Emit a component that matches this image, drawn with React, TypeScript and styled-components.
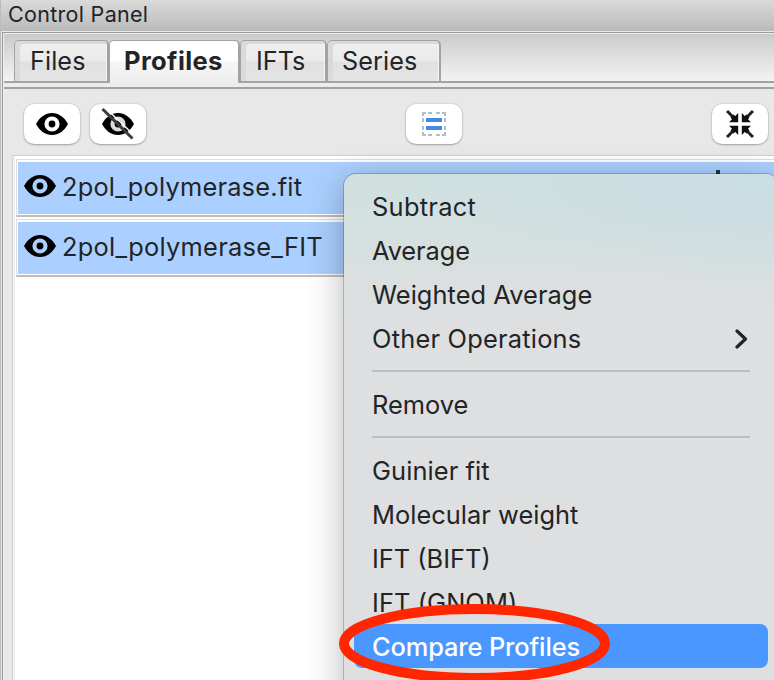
import React from "react";
import styled, { createGlobalStyle } from "styled-components";

const Global = createGlobalStyle`
  * { box-sizing: border-box; }
  body { margin: 0; overflow: hidden; background: #e8e8e8; }
`;

const Window = styled.div`
  position: relative;
  width: 774px;
  height: 680px;
  overflow: hidden;
  display: flex;
  flex-direction: column;
  border-left: 1px solid #bcbcbc;
  background: #e8e8e8;
  color: #222426;
  font-family: Inter, "Liberation Sans", sans-serif;
`;

const TitleBar = styled.header`
  flex: none;
  height: 31px;
  padding-left: 7px;
  font-size: 21.5px;
  line-height: 29px;
  letter-spacing: 0.3px;
  background: linear-gradient(#dadada, #bababa);
`;

const Notebook = styled.div`
  flex: 1;
  display: flex;
  flex-direction: column;
  margin: 1px 0 0 1px;
  border-top: 1px solid #989a9a;
  border-left: 1px solid #989a9a;
  box-shadow: inset 1px 1px 0 #f0f0f0;
  min-height: 0;
`;

const TabStrip = styled.nav`
  flex: none;
  display: flex;
  height: 55px;
  margin: 1px 0 0 1px;
  padding: 6px 0 0 10px;
  background: linear-gradient(#cbcbcb, #f3f3f3 47px, #a2a4a4 47px, #a2a4a4 49px, #ececec 49px, #ececec 53px, #a0a2a2 53px, #a0a2a2 55px);
`;

const Tab = styled.div<{ $width: number; $pad: number; $active?: boolean; $spacing: number }>`
  flex: none;
  width: ${(p) => p.$width}px;
  height: ${(p) => (p.$active ? 43 : 41)}px;
  padding-left: ${(p) => p.$pad}px;
  border: 2px solid #a2a4a4;
  border-left-width: 1px;
  border-top-width: 1px;
  border-bottom: 0;
  border-radius: 5px 5px 0 0;
  font-size: ${(p) => (p.$active ? 25.5 : 25.2)}px;
  font-weight: ${(p) => (p.$active ? 700 : 400)};
  letter-spacing: ${(p) => p.$spacing}px;
  line-height: 40px;
  white-space: nowrap;
  background: ${(p) =>
    p.$active
      ? "linear-gradient(#fff 20px, #f6f6f6 21px, #ededed)"
      : "linear-gradient(#efefef, #ebebeb 20px, #e0e0e0 21px, #e5e5e5)"};
  box-shadow: ${(p) => (p.$active ? "none" : "inset 5px 3px 0 #dadada, inset -1px 0 0 #f3f3f3")};
`;

const Toolbar = styled.div`
  flex: none;
  height: 66px;
  padding: 15px 6px 0 21px;
  display: flex;
  align-items: flex-start;
  justify-content: space-between;
`;

const ButtonGroup = styled.div`
  display: flex;
  width: 133px;
  gap: 10px;
`;

const CenterSlot = styled.div`
  flex: 1;
  padding-left: 249px;
`;

const ToolButton = styled.button`
  flex: none;
  width: 56px;
  height: 40px;
  padding: 0;
  border: 0;
  border-radius: 10px;
  display: flex;
  align-items: center;
  justify-content: center;
  background: #fff;
  color: #000;
  box-shadow: 0 0 2px #0003, 0 1px 2px #0004;
`;

const List = styled.section`
  flex: 1;
  margin-left: 9px;
  padding: 3px 0 0 3px;
  border: solid #d2d2d2;
  border-width: 1px 0 0 1px;
  background: linear-gradient(90deg, #f0f0f0 2px, #fff 2px);
`;

const Row = styled.div`
  height: 58px;
  margin-bottom: 2px;
  padding: 2px 0 2px 1px;
  border-top: 1px solid #dedede;
  border-left: 1px solid #dedede;
  border-bottom: 2px solid #bebebe;
  background: #fff;
`;

const RowFill = styled.div`
  display: flex;
  align-items: center;
  height: 52px;
  padding: 0 0 3px 6px;
  gap: 6px;
  background: #abd0ff;
`;

const RowName = styled.span<{ $spacing: number }>`
  font-size: 25.4px;
  line-height: 30px;
  letter-spacing: ${(p) => p.$spacing}px;
  white-space: nowrap;
`;

const RowMark = styled.span`
  align-self: flex-start;
  margin: 8px 54px 0 auto;
  width: 4px;
  height: 12px;
  background: #26364a;
`;

const Menu = styled.div`
  position: absolute;
  left: 343px;
  top: 174px;
  width: 434px;
  height: 560px;
  padding: 10px 10px 0;
  border-radius: 12px;
  background:
    radial-gradient(ellipse 380px 115px at 450px 0, #c9dee4 0, #cadde2aa 45%, #cadde200 100%),
    linear-gradient(#cfe1df, #d3e0df 50px, #dbdfe0 105px, #dedfe1 170px);
  box-shadow: 0 0 0 1px #0003, 0 8px 36px #0000004d;
`;

const MenuItem = styled.div<{ $selected?: boolean; $spacing: number }>`
  display: flex;
  align-items: center;
  justify-content: space-between;
  height: 44px;
  padding: 2px 20px 0 18px;
  border-radius: 8px;
  font-size: 25.4px;
  line-height: 42px;
  letter-spacing: ${(p) => p.$spacing}px;
  white-space: nowrap;
  color: ${(p) => (p.$selected ? "#fff" : "inherit")};
  background: ${(p) => (p.$selected ? "#4a98ff" : "none")};
  font-weight: ${(p) => (p.$selected ? 500 : 400)};
`;

const Separator = styled.hr`
  height: 2px;
  margin: 10px 18px;
  border: 0;
  background: #bdbec0;
`;

const Highlight = styled.svg`
  position: absolute;
  left: 333px;
  top: 598px;
`;

const EyeShape = ({ ring }: { ring: string }) => (
  <>
    <path d="M0 11C4 4 9 0 16 0s12 4 16 11c-4 7-9 11-16 11S4 18 0 11z" fill="#000" />
    <circle cx="16" cy="11" r="5.500" fill="none" stroke={ring} strokeWidth="4.200" />
    <circle cx="16" cy="11" r="3" fill="#000" />
  </>
);

const Eye = () => (
  <svg width="32" height="22" viewBox="0 0 32 22">
    <EyeShape ring="#fff" />
  </svg>
);

const ListEye = () => (
  <svg width="32" height="24" viewBox="0 0 32 24">
    <EyeShape ring="#abd0ff" />
  </svg>
);

const HiddenEye = () => (
  <svg width="34" height="34" viewBox="0 0 34 34">
    <g transform="translate(1 6)">
      <EyeShape ring="#dcdcdc" />
    </g>
    <path d="M6 2.500 34 29" stroke="#fff" strokeWidth="1.500" />
    <path d="M1.500 2 31.500 31.500" stroke="#3c3c3c" strokeWidth="3" />
  </svg>
);

const SelectAll = () => (
  <svg width="24" height="24" viewBox="0 0 24 24">
    <path
      d="M0 1H4M1 1V4M6 1h4M14 1h4M20 1h4M23 1V4M23 6v4M23 14v4M23 20v4M24 23H20M18 23H14M10 23H6M4 23H0M1 23V20M1 18V14M1 10V6"
      fill="none"
      stroke="#b0bec5"
      strokeWidth="2"
    />
    <path d="M4 6h16v4H4zM4 14h16v4H4z" fill="#4289e8" />
  </svg>
);

const Arrow = ({ angle }: { angle: number }) => (
  <g transform={`rotate(${angle} 14 14)`}>
    <path d="M1 1 9 9" stroke="#222" strokeWidth="3" />
    <path d="M12.200 3V12.200H3L6 9.200 4.500 7.500 7.500 4.500 9.200 6z" fill="#111" />
  </g>
);

const Collapse = () => (
  <svg width="28" height="28" viewBox="0 0 28 28">
    {[0, 90, 180, 270].map((angle) => (
      <Arrow key={angle} angle={angle} />
    ))}
  </svg>
);

const Chevron = () => (
  <svg width="13" height="20" viewBox="0 0 13 20">
    <path d="m2 2 8.500 8L2 18" fill="none" stroke="#222426" strokeWidth="3.200" strokeLinecap="round" strokeLinejoin="round" />
  </svg>
);

export default function App() {
  return (
    <>
      <Global />
      <Window>
        <TitleBar>Control Panel</TitleBar>
        <Notebook>
          <TabStrip>
            <Tab $width={95} $pad={15} $spacing={0.1}>Files</Tab>
            <Tab $width={131} $pad={14} $active $spacing={0.4}>Profiles</Tab>
            <Tab $width={87} $pad={15} $spacing={0}>IFTs</Tab>
            <Tab $width={114} $pad={14} $spacing={0.1}>Series</Tab>
          </TabStrip>
          <Toolbar>
            <ButtonGroup>
              <ToolButton aria-label="Show"><Eye /></ToolButton>
              <ToolButton aria-label="Hide"><HiddenEye /></ToolButton>
            </ButtonGroup>
            <CenterSlot>
              <ToolButton aria-label="Select all"><SelectAll /></ToolButton>
            </CenterSlot>
            <ToolButton aria-label="Collapse"><Collapse /></ToolButton>
          </Toolbar>
          <List>
            <Row>
              <RowFill><ListEye /><RowName $spacing={0.2}>2pol_polymerase.fit</RowName><RowMark /></RowFill>
            </Row>
            <Row>
              <RowFill><ListEye /><RowName $spacing={0.27}>2pol_polymerase_FIT</RowName></RowFill>
            </Row>
          </List>
        </Notebook>
        <Menu>
          <MenuItem $spacing={0.3}>Subtract</MenuItem>
          <MenuItem $spacing={-0.1}>Average</MenuItem>
          <MenuItem $spacing={0.06}>Weighted Average</MenuItem>
          <MenuItem $spacing={0.22}>Other Operations<Chevron /></MenuItem>
          <Separator />
          <MenuItem $spacing={0}>Remove</MenuItem>
          <Separator />
          <MenuItem $spacing={0.1}>Guinier fit</MenuItem>
          <MenuItem $spacing={0.03}>Molecular weight</MenuItem>
          <MenuItem $spacing={0}>IFT (BIFT)</MenuItem>
          <MenuItem $spacing={0.1}>IFT (GNOM)</MenuItem>
          <MenuItem $spacing={-0.12} $selected>Compare Profiles</MenuItem>
        </Menu>
        <Highlight width="282" height="90" viewBox="0 0 282 90">
          <ellipse cx="140.500" cy="45.500" rx="130.500" ry="34.500" fill="none" stroke="#ff2600" strokeWidth="10" />
        </Highlight>
      </Window>
    </>
  );
}
